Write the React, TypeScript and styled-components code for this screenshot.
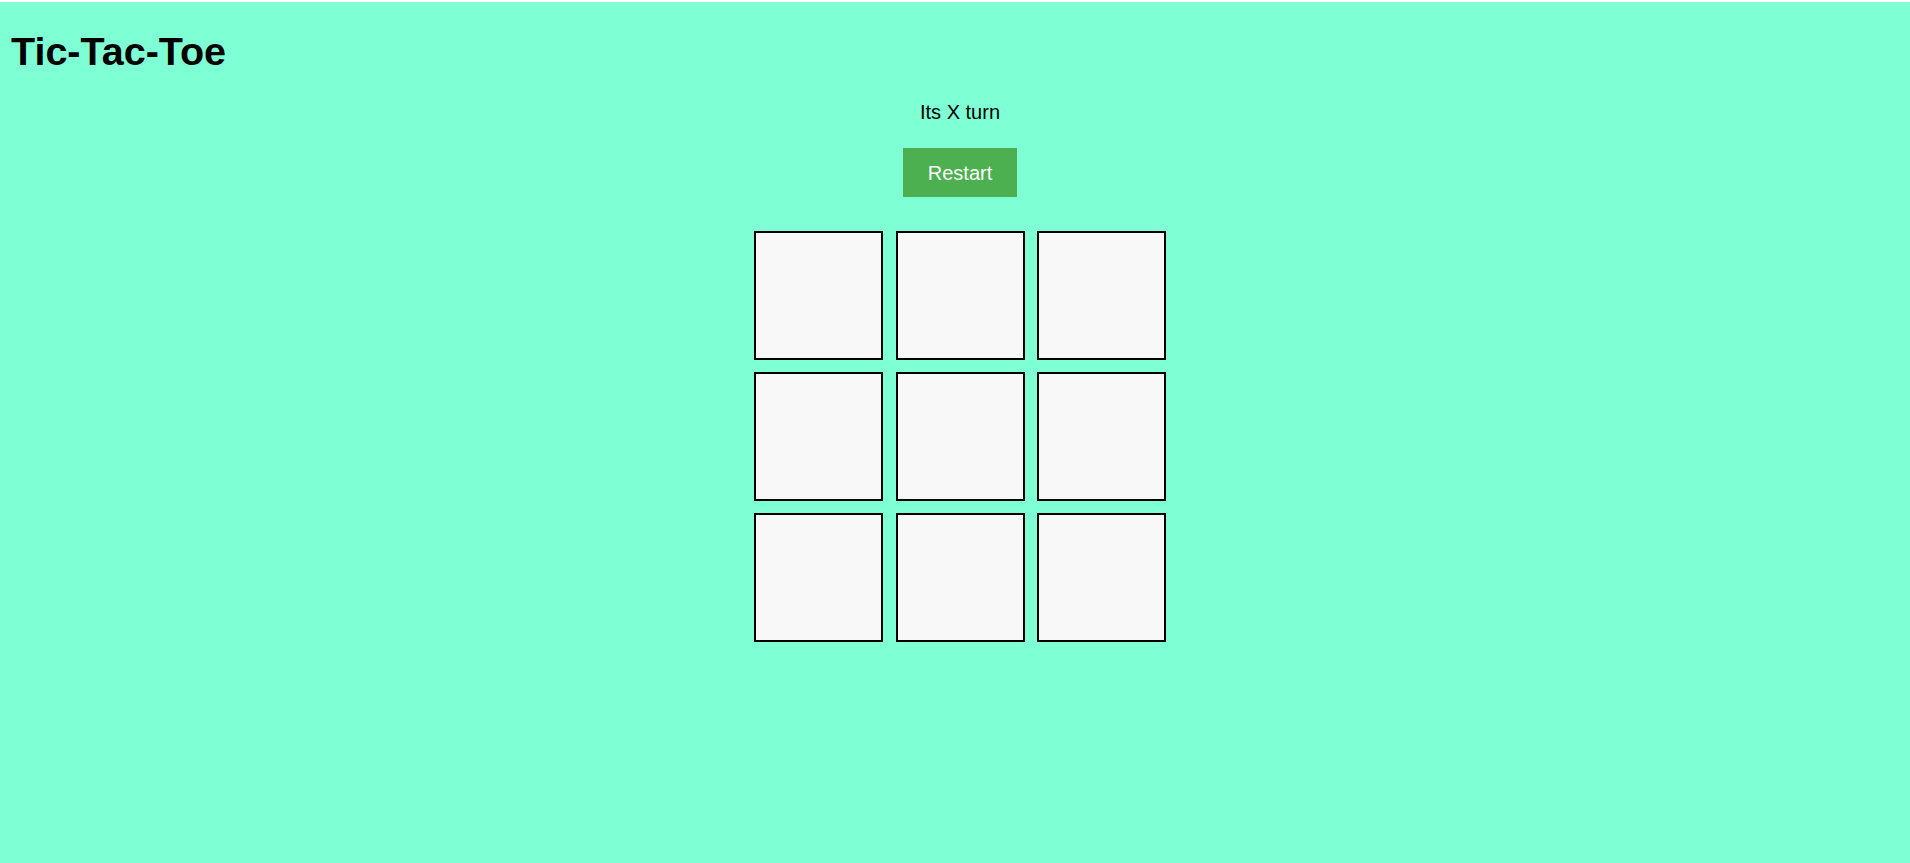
import React, { useState } from "react";
import styled, { createGlobalStyle } from "styled-components";

const GlobalStyle = createGlobalStyle`
  html, body {
    margin: 0;
    padding: 0;
    background: #ffffff;
  }
  body {
    font-family: "Liberation Sans", Arial, sans-serif;
  }
`;

const Page = styled.div`
  margin-top: 2px;
  min-height: calc(100vh - 2px);
  background: #7fffd4;
  display: flex;
  flex-direction: column;
  overflow: hidden;
`;

const Title = styled.h1`
  margin: 26px 0 0;
  padding-left: 11px;
  font-size: 39.5px;
  line-height: 46px;
  font-weight: 700;
  color: #000000;
`;

const Game = styled.main`
  display: flex;
  flex-direction: column;
  align-items: center;
  padding-left: 10px;
`;

const Status = styled.p`
  margin: 27px 0 0;
  font-size: 20px;
  line-height: 23px;
  color: #000000;
`;

const RestartButton = styled.button`
  margin-top: 24px;
  padding: 12.5px 25px;
  border: none;
  background: #4caf50;
  color: #ffffff;
  font-family: "Liberation Sans", Arial, sans-serif;
  font-size: 20px;
  line-height: 24px;
  cursor: pointer;
`;

const Board = styled.div`
  margin-top: 34px;
  display: grid;
  grid-template-columns: repeat(3, 129px);
  grid-auto-rows: 129px;
  column-gap: 12.5px;
  row-gap: 12px;
`;

const Cell = styled.button`
  box-sizing: border-box;
  width: 129px;
  height: 129px;
  padding: 0;
  border: 2px solid #000000;
  background: #f8f8f8;
  font-family: "Liberation Sans", Arial, sans-serif;
  font-size: 64px;
  font-weight: 700;
  color: #000000;
  cursor: pointer;
`;

export default function App() {
  const [cells, setCells] = useState<(string | null)[]>(Array(9).fill(null));
  const [turn, setTurn] = useState<"X" | "O">("X");

  const play = (i: number) => {
    if (cells[i]) return;
    const next = cells.slice();
    next[i] = turn;
    setCells(next);
    setTurn(turn === "X" ? "O" : "X");
  };

  const restart = () => {
    setCells(Array(9).fill(null));
    setTurn("X");
  };

  return (
    <>
      <GlobalStyle />
      <Page>
        <Title>Tic-Tac-Toe</Title>
        <Game>
          <Status>Its {turn} turn</Status>
          <RestartButton onClick={restart}>Restart</RestartButton>
          <Board>
            {cells.map((c, i) => (
              <Cell key={i} onClick={() => play(i)}>
                {c}
              </Cell>
            ))}
          </Board>
        </Game>
      </Page>
    </>
  );
}
